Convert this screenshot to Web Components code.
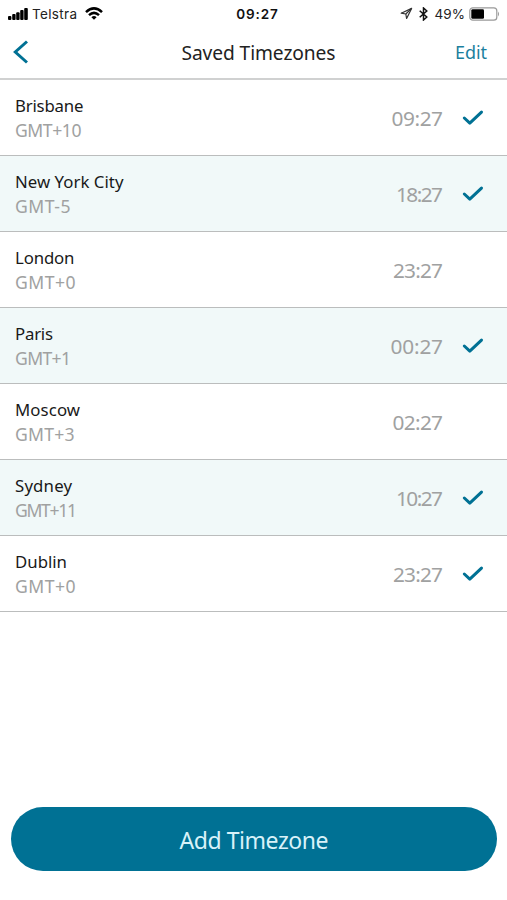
<!DOCTYPE html>
<html lang="en">
<head>
<meta charset="utf-8">
<title>Saved Timezones</title>
<style>
    body {
        margin: 0;
        background: #fff;
        font-family: "Noto Sans", "Open Sans", sans-serif;
        --primary-color: #007194;
        --line-color: #bbbdbd;
        --text-secondary: #a0a1a1;
    }
</style>
</head>
<body>
<timezone-app></timezone-app>

<script>
// Text tracked out (or in) to fill a given width
class FitText extends HTMLElement {
    constructor() {
        super();
        this.attachShadow({ mode: 'open' });
        this.shadowRoot.innerHTML = `
            <style>
                :host { display: block; white-space: nowrap; }
                span { display: inline-block; }
            </style>
            <span><slot></slot></span>
        `;
    }

    connectedCallback() {
        const span = this.shadowRoot.querySelector('span');
        const width = Number(this.getAttribute('width'));
        const count = this.textContent.length;
        const spacing = (width - span.getBoundingClientRect().width) / (count - 1);
        span.style.letterSpacing = `${spacing}px`;
        span.style.marginRight = `${-spacing}px`;
    }
}

class StatusBar extends HTMLElement {
    connectedCallback() {
        this.attachShadow({ mode: 'open' }).innerHTML = `
            <style>
                :host {
                    display: grid;
                    grid-template-columns: 1fr auto 1fr;
                    align-items: center;
                    box-sizing: border-box;
                    height: 27px;
                    padding: 0 7px 0 8px;
                    font: 13.5px/26px Inter, "Liberation Sans", sans-serif;
                    color: #222;
                }
                fit-text { padding-top: 1px; }
                .side { display: flex; align-items: center; }
                .right { justify-content: flex-end; }
                .time { padding-left: 6px; font-weight: 600; color: #111; }
                svg { display: block; flex: none; }
                .signal { margin-right: 4px; }
                .wifi { margin-left: 8px; }
                .bluetooth { margin: 0 7px 0 6px; }
                .battery { margin-left: 4px; }
            </style>
            <div class="side">
                <svg class="signal" width="20" height="12" viewBox="0 0 20 12" fill="#000">
                    <rect y="8" width="3.4" height="4" rx="1"/>
                    <rect x="4.2" y="6" width="3.4" height="6" rx="1"/>
                    <rect x="8.2" y="4.2" width="3.4" height="7.8" rx="1"/>
                    <rect x="12.2" y="2" width="3.4" height="10" rx="1"/>
                    <rect x="16.2" y="0" width="3.6" height="12" rx="1"/>
                </svg>
                <fit-text width="45">Telstra</fit-text>
                <svg class="wifi" width="18" height="13" viewBox="0 0 18 13" fill="none" stroke="#000" stroke-width="2.5">
                    <path d="M1 5.1Q9-2.4 17 5.1"/>
                    <path d="M4 8.2Q9 3.6 14 8.2"/>
                    <path d="M9 12.7L6.4 10.2Q9 8 11.6 10.2Z" fill="#000" stroke="none"/>
                </svg>
            </div>
            <fit-text class="time" width="41.5">09:27</fit-text>
            <div class="side right">
                <svg width="13" height="13" viewBox="0 0 13 13" fill="none" stroke="#333" stroke-width="1.2" stroke-linejoin="round">
                    <path d="M11.6 1.4L1.2 6.2L5.8 7L6.6 11.5Z"/>
                    <path d="M11.6 1.4L5.8 7"/>
                </svg>
                <svg class="bluetooth" width="9" height="14" viewBox="0 0 9 14" fill="none" stroke="#111" stroke-width="1.5">
                    <path d="M.7 3.7L7.8 10L4.5 13V1L7.8 4L.7 10.3"/>
                </svg>
                <fit-text width="30.5">49%</fit-text>
                <svg class="battery" width="31" height="14" viewBox="0 0 31 14">
                    <rect x=".8" y=".8" width="27" height="12.4" rx="3" fill="#fff" stroke="#999" stroke-width="1.2"/>
                    <rect x="2.3" y="2.2" width="12.7" height="9.6" rx="1.3"/>
                    <path d="M29 4.5Q31 7 29 9.5Z" fill="#999"/>
                </svg>
            </div>
        `;
    }
}

class NavBar extends HTMLElement {
    connectedCallback() {
        this.attachShadow({ mode: 'open' }).innerHTML = `
            <style>
                :host {
                    display: grid;
                    grid-template-columns: 1fr auto 1fr;
                    align-items: center;
                    box-sizing: border-box;
                    height: 53px;
                    padding: 0 20px 2px 12px;
                    border-bottom: 2px solid #d0d1d1;
                    line-height: 26px;
                }
                .title { padding: 2px 0 0 18px; font-size: 19.2px; color: #222; }
                .edit { justify-self: end; font-size: 18px; color: #1c7f9e; }
                svg { display: block; }
            </style>
            <svg width="17" height="24" viewBox="0 0 17 24" fill="none" stroke="#007194" stroke-width="3">
                <path d="M15 1.5L3.3 12L15 22.5"/>
            </svg>
            <fit-text class="title" width="154">${this.textContent}</fit-text>
            <fit-text class="edit" width="32">Edit</fit-text>
        `;
    }
}

class TimezoneRow extends HTMLElement {
    connectedCallback() {
        const { city, cityWidth, zone, zoneWidth, time, timeWidth } = this.dataset;
        const tick = `
            <svg width="22" height="18" viewBox="0 0 22 18" fill="none" stroke="#007194" stroke-width="3" stroke-linecap="round" stroke-linejoin="round">
                <path d="M2.3 9L7.8 14.2L19.5 3.1"/>
            </svg>
        `;
        this.attachShadow({ mode: 'open' }).innerHTML = `
            <style>
                :host {
                    display: grid;
                    grid-template-columns: 1fr auto 22px;
                    align-items: center;
                    box-sizing: border-box;
                    height: 76px;
                    padding: 0 23px 0 15px;
                    border-bottom: 1px solid var(--line-color);
                }
                :host([tinted]) { background: #f1f9f9; }
                .city { font-size: 16.8px; line-height: 24px; color: #191919; }
                .zone { font-size: 17.6px; line-height: 24px; color: var(--text-secondary); }
                .time {
                    padding: 0 19px 0 0;
                    font-size: 20.8px;
                    line-height: 28px;
                    color: var(--text-secondary);
                }
                svg { display: block; }
            </style>
            <div>
                <fit-text class="city" width="${cityWidth}">${city}</fit-text>
                <fit-text class="zone" width="${zoneWidth}">${zone}</fit-text>
            </div>
            <fit-text class="time" width="${timeWidth}">${time}</fit-text>
            ${this.hasAttribute('checked') ? tick : ''}
        `;
    }
}

class PillButton extends HTMLElement {
    connectedCallback() {
        this.attachShadow({ mode: 'open' }).innerHTML = `
            <style>
                :host { display: block; }
                button {
                    display: flex;
                    align-items: center;
                    justify-content: center;
                    width: 100%;
                    height: 64px;
                    padding: 2px 0 0;
                    border: 0;
                    border-radius: 32px;
                    background: var(--primary-color);
                    color: #d8f2f9;
                    font: 23px/32px "Noto Sans", "Open Sans", sans-serif;
                }
            </style>
            <button><fit-text width="149">${this.textContent}</fit-text></button>
        `;
    }
}

class TimezoneApp extends HTMLElement {
    constructor() {
        super();
        this.attachShadow({ mode: 'open' });
        this.zones = [
            ['Brisbane', 68.5, 'GMT+10', 66.5, '09:27', 51.5, true],
            ['New York City', 108.5, 'GMT-5', 55.5, '18:27', 47, true],
            ['London', 59.5, 'GMT+0', 60.5, '23:27', 50, false],
            ['Paris', 38, 'GMT+1', 56, '00:27', 52.5, true],
            ['Moscow', 65, 'GMT+3', 59.5, '02:27', 50.5, false],
            ['Sydney', 57, 'GMT+11', 62, '10:27', 47, true],
            ['Dublin', 52, 'GMT+0', 60.5, '23:27', 50, true]
        ];
    }

    connectedCallback() {
        this.shadowRoot.innerHTML = `
            <style>
                :host {
                    display: flex;
                    flex-direction: column;
                    box-sizing: border-box;
                    height: 900px;
                    overflow: hidden;
                }
                pill-button { margin: auto 10px 29px 11px; }
            </style>
            <status-bar></status-bar>
            <nav-bar>Saved Timezones</nav-bar>
            ${this.zones.map(([city, cw, zone, zw, time, tw, checked], i) => `
                <timezone-row ${i % 2 ? 'tinted' : ''} ${checked ? 'checked' : ''}
                    data-city="${city}" data-city-width="${cw}"
                    data-zone="${zone}" data-zone-width="${zw}"
                    data-time="${time}" data-time-width="${tw}"></timezone-row>
            `).join('')}
            <pill-button>Add Timezone</pill-button>
        `;
    }
}

customElements.define('fit-text', FitText);
customElements.define('status-bar', StatusBar);
customElements.define('nav-bar', NavBar);
customElements.define('timezone-row', TimezoneRow);
customElements.define('pill-button', PillButton);
customElements.define('timezone-app', TimezoneApp);
</script>
</body>
</html>
